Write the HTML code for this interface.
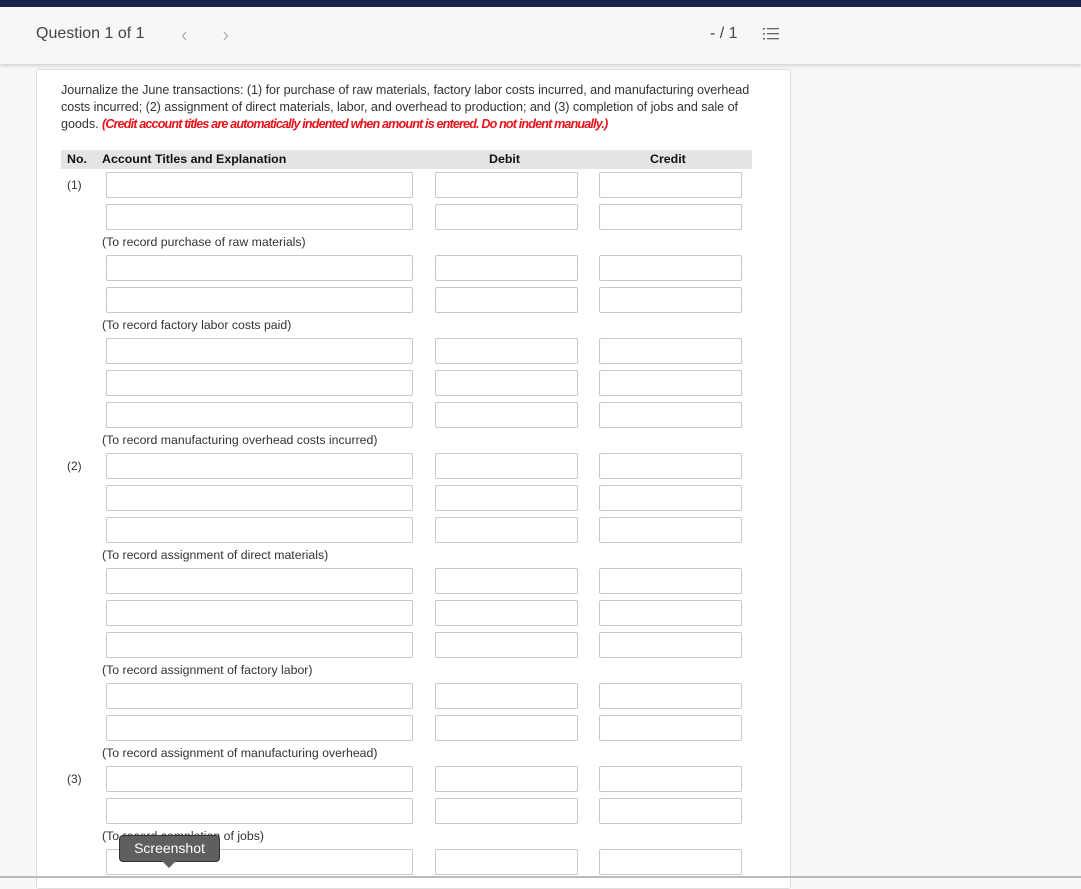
<!DOCTYPE html>
<html><head><meta charset="utf-8"><style>
*{margin:0;padding:0;box-sizing:border-box}
body{width:1081px;height:878px;overflow:hidden;background:#f8f8f8;font-family:"Liberation Sans",sans-serif;position:relative;color:#333}
.top{position:absolute;left:0;top:0;width:1081px;height:7px;background:#19214a}
.hdr{position:absolute;left:0;top:7px;width:1081px;height:57px;background:#f7f7f7;box-shadow:0 2px 3px rgba(0,0,0,.15)}
.card{position:absolute;left:36px;top:69px;width:755px;height:820px;background:#fff;border:1px solid #ddd;border-radius:3px}
.a{position:absolute}
.in{position:absolute;height:26px;border:1px solid #c8c8c8;background:#fff;border-radius:2px}
.lb{position:absolute;left:102px;font-size:12.3px;color:#333;white-space:nowrap}
.no{position:absolute;left:67px;font-size:12px;color:#333}
.ln{position:absolute;left:61px;font-size:12.6px;white-space:nowrap;color:#333;letter-spacing:-0.05px}
</style></head><body>
<div class="top"></div>
<div class="hdr">
<div class="a" style="left:36px;top:18px;font-size:16px;color:#444">Question 1 of 1</div>
<svg class="a" style="left:180px;top:23px" width="8" height="12"><path d="M6 2L2.5 6 6 10" fill="none" stroke="#aaa" stroke-width="1.2"/></svg>
<svg class="a" style="left:222px;top:23px" width="8" height="12"><path d="M2 2l3.5 4L2 10" fill="none" stroke="#aaa" stroke-width="1.2"/></svg>
<div class="a" style="left:710px;top:18px;font-size:16px;color:#444">- / 1</div>
<svg class="a" style="left:763px;top:20px" width="18" height="14"><g fill="#666"><rect x="0" y="1" width="2" height="1.5"/><rect x="0" y="6" width="2" height="1.5"/><rect x="0" y="11" width="2" height="1.5"/><rect x="4" y="1" width="12" height="1.3"/><rect x="4" y="6" width="12" height="1.3"/><rect x="4" y="11" width="12" height="1.3"/></g></svg>
</div>
<div class="card"></div>
<div class="ln" style="top:83px">Journalize the June transactions: (1) for purchase of raw materials, factory labor costs incurred, and manufacturing overhead</div>
<div class="ln" style="top:100px">costs incurred; (2) assignment of direct materials, labor, and overhead to production; and (3) completion of jobs and sale of</div>
<div class="ln" style="top:117px">goods. <b style="color:#e8131b;font-style:italic;letter-spacing:-0.85px">(Credit account titles are automatically indented when amount is entered. Do not indent manually.)</b></div>
<div class="a" style="left:61px;top:150px;width:691px;height:19px;background:#e4e4e4;font-size:12.4px;font-weight:bold;color:#111">
<span class="a" style="left:6px;top:2px">No.</span><span class="a" style="left:41px;top:2px">Account Titles and Explanation</span><span class="a" style="left:428px;top:2px">Debit</span><span class="a" style="left:589px;top:2px">Credit</span></div>
<div id="rows"></div>
<div class="no" style="top:178px">(1)</div>
<div class="no" style="top:459px">(2)</div>
<div class="no" style="top:772px">(3)</div>
<div class="lb" style="top:235px">(To record purchase of raw materials)</div>
<div class="lb" style="top:318px">(To record factory labor costs paid)</div>
<div class="lb" style="top:433px">(To record manufacturing overhead costs incurred)</div>
<div class="lb" style="top:548px">(To record assignment of direct materials)</div>
<div class="lb" style="top:663px">(To record assignment of factory labor)</div>
<div class="lb" style="top:746px">(To record assignment of manufacturing overhead)</div>
<div class="lb" style="top:829px">(To record completion of jobs)</div>
<script>
var ys=[172,204,255,287,338,370,402,453,485,517,568,600,632,683,715,766,798,849];
var h='';ys.forEach(function(y){h+='<div class="in" style="left:106px;top:'+y+'px;width:307px"></div><div class="in" style="left:435px;top:'+y+'px;width:143px"></div><div class="in" style="left:599px;top:'+y+'px;width:143px"></div>';});
document.getElementById('rows').innerHTML=h;
</script>
<div class="a" style="left:0;top:876px;width:1081px;height:2px;background:#bbb"></div>
<div class="a" style="left:119px;top:835px;width:101px;height:27px;background:#5f5f5f;border:1px solid #333;border-radius:4px;color:#fff;font-size:14px;text-align:center;line-height:25px">Screenshot</div>
<div class="a" style="left:162px;top:861px;width:0;height:0;border-left:7px solid transparent;border-right:7px solid transparent;border-top:7px solid #5f5f5f"></div>
</body></html>
